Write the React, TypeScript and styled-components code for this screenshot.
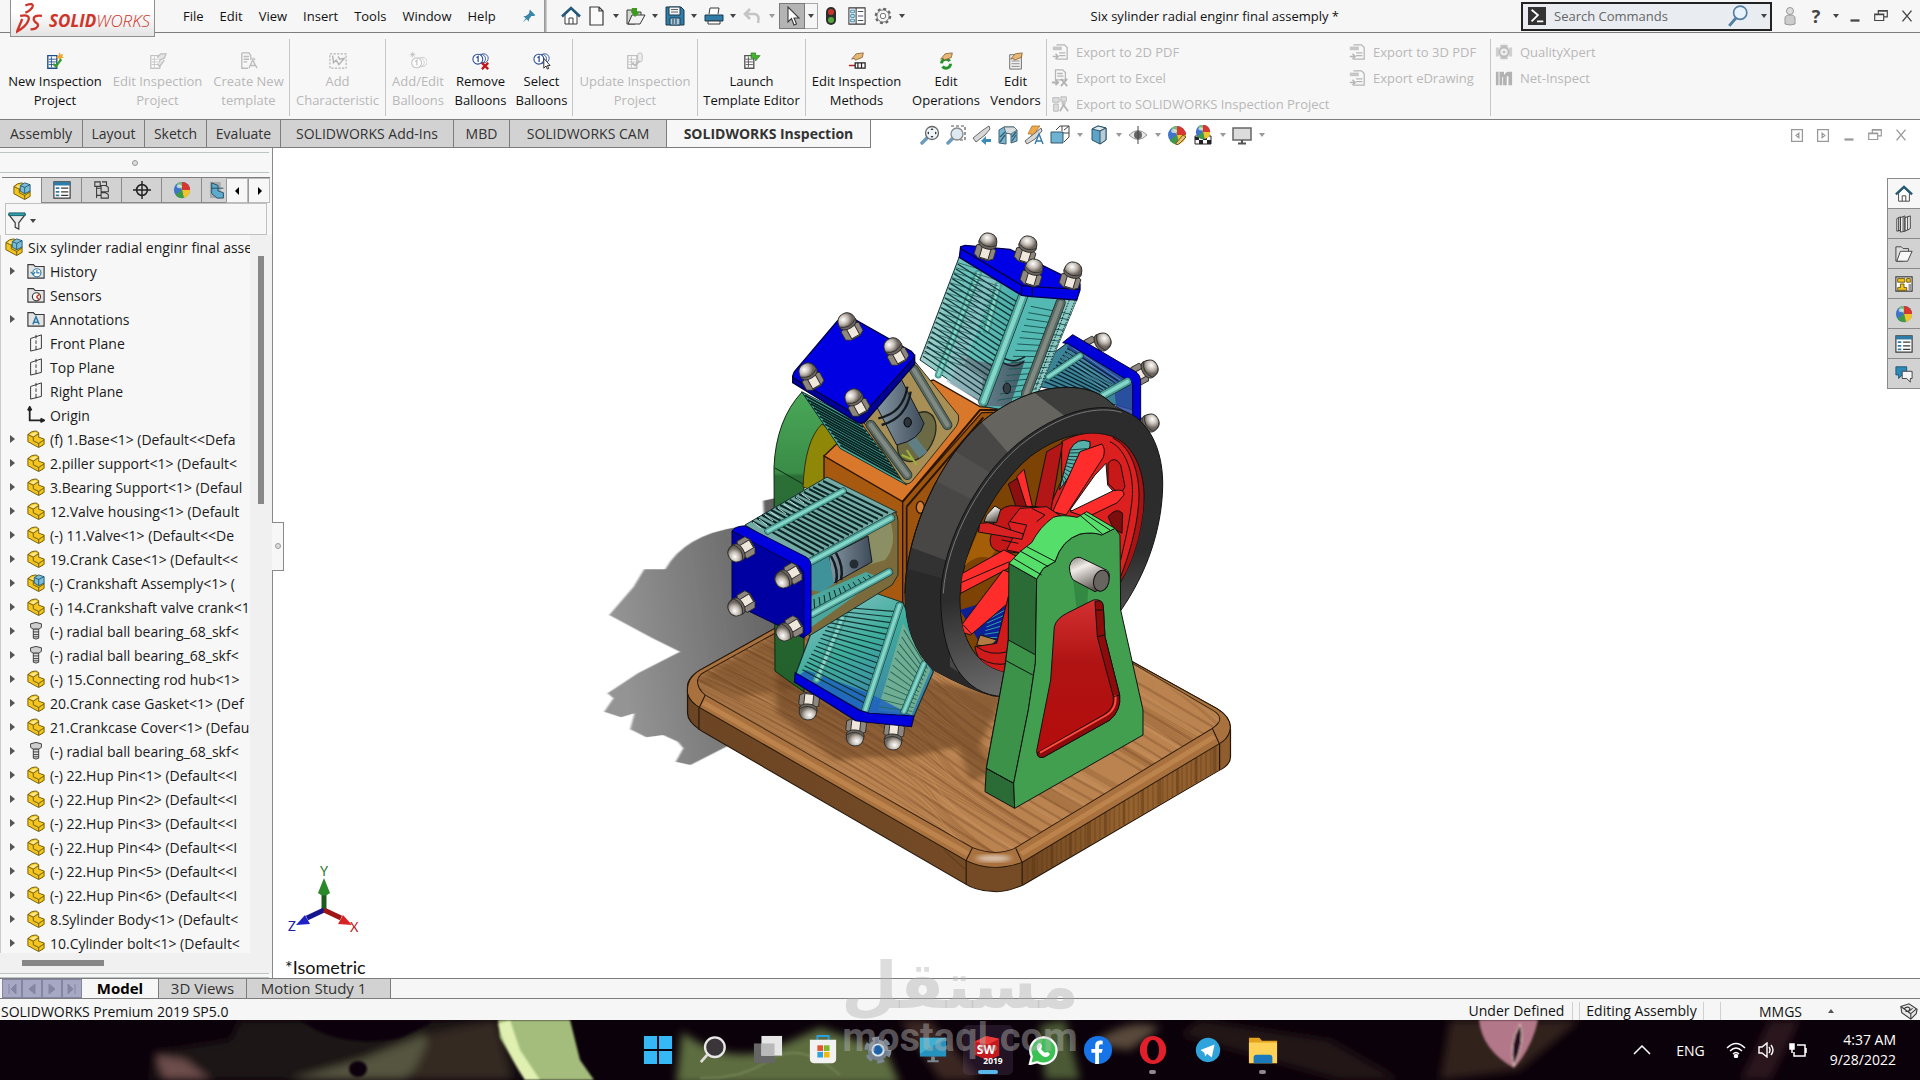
import React from 'react';
import styled, { createGlobalStyle, css } from 'styled-components';

const GlobalStyle = createGlobalStyle`
  *, *::before, *::after { box-sizing: border-box; }
  body {
    margin: 0;
    background: #fff;
    color: #1a1a1a;
    font-family: "Open Sans", "Noto Sans", sans-serif;
    font-size: 14px;
  }
  button, input { font: inherit; color: inherit; }
  button { padding: 0; border: 0; background: none; white-space: nowrap; }
  svg { display: block; flex: none; }
`;

/* ---------- icons ---------- */

const ink = '#3a3a3a';
const blue = '#2f7da6';

const Ball = () => (
  <>
    <circle cx="10" cy="10" r="9" fill="#3f74c8" />
    <path d="M10 10 4 3.300A9 9 0 0 1 10 1z" fill="#7ab97c" />
    <path d="M10 10V1a9 9 0 0 1 9 9z" fill="#d8372f" />
    <path d="M10 10h9a9 9 0 0 1-7 8.800z" fill="#f0c52c" />
    <path d="M10 10 12 18.800A9 9 0 0 1 2.800 15.400z" fill="#3e9a45" />
    <ellipse cx="7" cy="6" rx="3" ry="2" fill="#fff" opacity=".6" />
  </>
);
const PartShape = () => (
  <>
    <path d="M1 5 5 2 10 1 13 3V8L19 10V16L13 19.500 1 13z" fill="#f2c51f" stroke="#6b5206" strokeWidth="1" />
    <path d="M1 5 7 8 13 4M7 8V12L13 15V19M13 15 19 11" stroke="#6b5206" fill="none" />
    <path d="M3 5 7 7 11.500 4 9 2.500z" fill="#fbe98d" />
  </>
);
const HandShape = () => <path d="M4 8 9 2 17 1 16 6 11 8 8 9 7 7z" fill="#e6b877" stroke="#7a5320" strokeWidth=".8" />;
const Folder = () => <path d="M1 3h6l2 2h10v13H1z" fill="#e4e4e4" stroke={ink} strokeWidth="1.300" />;
const Balloons = () => (
  <>
    <circle cx="13" cy="7" r="5" fill="#fff" stroke="currentColor" />
    <circle cx="10" cy="7.500" r="5" fill="#fff" stroke="currentColor" />
    <circle cx="6.500" cy="8" r="5.500" fill="#fff" stroke="currentColor" strokeWidth="1.200" />
    <path d="M5 6.500 6.800 5v6" stroke="currentColor" fill="none" strokeWidth="1.400" />
  </>
);
const Sheet = ({ tone = '#1f4f8a' }: { tone?: string }) => (
  <>
    <path d="M2 4h10v14H2z" fill="#fff" stroke={tone} strokeWidth="1.500" />
    <path d="M3 8h8M3 11h8M3 14h8M6 5v12" stroke={tone} />
  </>
);
const Glass = () => <path d="M7.500 12.500 2 18" stroke="#6d9bbb" strokeWidth="3.500" strokeLinecap="round" />;

const art: Record<string, React.ReactNode> = {
  home: (
    <>
      <path d="M4 9v9h12V9l-6-6z" fill="#fff" stroke={ink} />
      <path d="M1 10.500 10 2l9 8.500" fill="none" stroke="#245a78" strokeWidth="2.600" />
      <path d="M8 18v-6h4v6" fill="none" stroke={ink} />
    </>
  ),
  doc: <path d="M3 1h9l4 4v14H3zM12 1v4h4" fill="#fafafa" stroke={ink} strokeWidth="1.200" />,
  open: (
    <>
      <path d="M1 4h5l2 2h7v3L9 18H1z" fill="#d5d5d5" stroke={ink} />
      <path d="M6 9h13l-5 9H2z" fill="#f2f2f2" stroke={ink} />
      <path d="M6 2h5v4h3l-5 5-4-5z" fill="#3c9a1c" />
    </>
  ),
  save: (
    <>
      <path d="M1 1h15l3 3v15H1z" fill={blue} stroke="#183b4f" />
      <path d="M4 1h11v8H4z" fill="#f3f3f3" stroke="#183b4f" />
      <path d="M6 3.500h7M6 6h7" stroke="#666" />
      <path d="M5 12h10v7H5zM8 13v5M11 13v5" fill="#aac8d8" stroke="#183b4f" />
    </>
  ),
  print: (
    <>
      <path d="M5 8 6 2h9l-1 6" fill="#fff" stroke={ink} />
      <path d="M1 9h18v6H1z" fill={blue} stroke="#183b4f" />
      <path d="M4 15h12v3H4z" fill="#fff" stroke={ink} />
    </>
  ),
  undo: <path d="M4 8h8q5 1 3 9M7 3 2 8l5 5" fill="none" stroke="#c4c4c4" strokeWidth="2.600" />,
  cursor: <path d="M6 1v15l3.500-3.500L12 19l2.500-1-2.500-6h5z" fill="#fff" stroke={ink} strokeWidth="1.100" />,
  traffic: (
    <>
      <rect x="5" y="1" width="10" height="18" rx="5" fill="#2d2d2d" />
      <circle cx="10" cy="6" r="3" fill="#c9342b" />
      <circle cx="10" cy="14" r="3" fill="#55a83e" />
    </>
  ),
  list: (
    <>
      <path d="M1 1h18v18H1zM9 1v18" fill="#fff" stroke={ink} strokeWidth="1.200" />
      <path d="M3 3.500h4v3H3zM3 8.500h4v3H3zM3 13.500h4v3H3z" fill="#d6ecf7" stroke={blue} />
      <path d="M11 5h6M11 10h6M11 15h6" stroke={ink} />
    </>
  ),
  gear: (
    <>
      <circle cx="10" cy="10" r="8" fill="none" stroke="#666" strokeWidth="2.400" strokeDasharray="3.300 2.980" />
      <circle cx="10" cy="10" r="6.800" fill="#f4f4f4" stroke="#666" />
      <circle cx="10" cy="10" r="3" fill="#fff" stroke="#666" />
    </>
  ),
  pin: <path d="M11 2 18 9l-2 1-3 0-3 4 0 3-3-3-5 4 4-5-3-3h3l4-3z" fill="#3b86a8" />,
  newProj: (
    <>
      <Sheet />
      <path d="m15 0 1 3 3-1-1 3 2 1-3 1-2 3-1-3-3-1 3-2z" fill="#efa629" />
      <path d="M8 13 11 16 17 8" fill="none" stroke="#3d9a2d" strokeWidth="2.500" />
    </>
  ),
  editProj: (
    <>
      <Sheet tone="#c4c4c4" />
      <path d="M9 6 13 2h6l-2 5-5 2M9 13l3 3 5-7" fill="#e4e4e4" stroke="#c0c0c0" strokeWidth="1.500" />
    </>
  ),
  template: (
    <>
      <path d="M2 1h8l2 3v5M2 1v17h7M4 5h6M4 8h6M4 11h4" fill="none" stroke="#bcbcbc" strokeWidth="1.500" />
      <path d="M10 18 14 9l5 9M12 15h5" fill="none" stroke="#bcbcbc" strokeWidth="1.500" />
      <circle cx="15" cy="8" r="2" fill="#ccc" />
    </>
  ),
  characteristic: (
    <>
      <path d="M1 2h18v16H1z" fill="none" stroke="#b4b4b4" strokeWidth="1.300" strokeDasharray="2.500 1.500" />
      <path d="m4 4 1 8 3-3 3 5 6-7-5 1-2-3" fill="none" stroke="#b4b4b4" strokeWidth="1.600" />
    </>
  ),
  balloonAdd: (
    <>
      <g color="#c4c4c4" transform="translate(2 4)"><Balloons /></g>
      <path d="M4 0v6M1 3h6M2 1l4 4M6 1 2 5" stroke="#c4c4c4" />
    </>
  ),
  balloonRemove: (
    <>
      <g color="#2c4c9a"><Balloons /></g>
      <path d="m11 12 7 7M18 12l-7 7" stroke="#c01818" strokeWidth="2.600" />
    </>
  ),
  balloonSelect: (
    <>
      <g color="#2c4c9a"><Balloons /></g>
      <path d="M12 7v11l2.500-2.500L16 19l1.500-.700L16 15h3z" fill="#fff" stroke="#222" />
    </>
  ),
  updateProj: (
    <>
      <Sheet tone="#c0c0c0" />
      <rect x="13" y="1" width="5" height="10" rx="2.500" fill="#eee" stroke="#bbb" />
      <path d="M7 12l3 3 5-5" fill="none" stroke="#bbb" strokeWidth="2" />
    </>
  ),
  launch: (
    <>
      <Sheet tone="#555" />
      <path d="M9 1h5v3h5l-5 6V7H9z" fill="#41b52c" stroke="#23701a" strokeWidth=".7" />
    </>
  ),
  methods: (
    <>
      <HandShape />
      <path d="M1 15h7" stroke="#b51c1c" strokeWidth="1.600" />
      <path d="M8 12h11v6H8zM11 12v6M15 12v6" fill="#fff" stroke="#222" strokeWidth="1.400" />
    </>
  ),
  operations: (
    <>
      <circle cx="10" cy="13" r="5" fill="none" stroke="#27932a" strokeWidth="3.400" strokeDasharray="12 3.700" />
      <HandShape />
    </>
  ),
  vendors: (
    <>
      <path d="M3 3h13v16H3z" fill="#eee" stroke="#666" />
      <path d="M5 10h9M5 13h9M5 16h9" stroke="#888" />
      <HandShape />
    </>
  ),
  exportDoc: (
    <>
      <path d="M6 2h9l3 3v13H6" fill="none" stroke="#b6b6b6" strokeWidth="1.400" />
      <path d="M2 4h10v4H2z" fill="#c6c6c6" />
      <path d="M9 11h7M9 14h7M2 15h6M5 12l3 3-3 3" fill="none" stroke="#b6b6b6" strokeWidth="1.600" />
    </>
  ),
  exportXls: (
    <>
      <path d="M5 1h8l3 3v8H5zM7 5h6M7 8h7" fill="none" stroke="#b6b6b6" strokeWidth="1.400" />
      <path d="M1 15h7M5 12l3 3-3 3M11 11l7 8M18 11l-7 8" fill="none" stroke="#b2b2b2" strokeWidth="2" />
    </>
  ),
  exportSw: (
    <>
      <path d="M2 3h7v5H2zM11 2h6v5h-6zM3 10h5v8H3z" fill="#dedede" stroke="#b6b6b6" />
      <circle cx="14" cy="9" r="2.500" fill="#c6c6c6" />
      <path d="M10 18 14 11l5 7" fill="none" stroke="#b6b6b6" strokeWidth="2" />
    </>
  ),
  quality: (
    <>
      <path d="M6 2h8v16H6z" fill="#c4c4c4" />
      <path d="M1 5h4v10H1zM15 5h4v10h-4z" fill="#d0d0d0" />
      <circle cx="10" cy="10" r="5" fill="#eee" stroke="#bbb" strokeWidth="2" />
      <circle cx="10" cy="10" r="1.500" fill="#bbb" />
    </>
  ),
  netInspect: <path d="M1 3h3v15H1zM5 3h5v4q2-4 4-4h5v15h-4V8h-2v10H9V9H8v9H5z" fill="#b2b2b2" />,
  zoomFit: (
    <>
      <Glass />
      <circle cx="12" cy="8" r="6.500" fill="#eef6fa" stroke="#666" strokeWidth="1.300" />
      <path d="m12 3 1.500 2h-3zM12 13l1.500-2h-3zM7 8l2-1.500v3zM17 8l-2-1.500v3z" fill="#333" />
    </>
  ),
  zoomArea: (
    <>
      <path d="M5 1h14v14h-5" fill="none" stroke="#555" strokeDasharray="3 2" strokeWidth="1.200" />
      <Glass />
      <circle cx="11" cy="9" r="6" fill="#dce9f0" stroke="#888" strokeWidth="1.300" />
    </>
  ),
  prevView: (
    <>
      <path d="M1 13 11 5l6-4 1 3-5 6-9 7z" fill="#d8d8d8" stroke="#666" />
      <path d="M19 14h-5v-3l-5 5 5 4v-3h5z" fill="#3b8db8" />
    </>
  ),
  section: (
    <>
      <path d="M1 5 6 2h10l3 3v11l-6 2V9L8 8v11l-7-1z" fill="#79b6d3" stroke="#44606e" />
      <path d="M2 17 7 10M2 12l5-5M14 16l4-6M14 12l4-5" stroke="#2f6076" strokeWidth="1.300" />
      <path d="M6 2h10l3 3-6 4-5-1z" fill="#d8dde0" stroke="#44606e" strokeWidth=".8" />
    </>
  ),
  annotate: (
    <>
      <path d="M8 1h8l-4 5h4L4 18l4-9H4z" fill="#f0a94a" stroke="#9c6a1e" strokeWidth=".7" />
      <path d="M1 16 11 8l6-5 1 3-7 8-8 5z" fill="#d8d8d8" stroke="#666" />
      <path d="m11 19 4-10 4 10M12.500 16h5" fill="none" stroke="#3479ad" strokeWidth="1.400" />
    </>
  ),
  orient: (
    <>
      <path d="M6 5 10 1h9v11l-5 5M14 5l5-4M12 1v5M6 8h13" fill="none" stroke="#444" />
      <path d="M1 7h12v11H1z" fill="#6fb2d2" stroke="#35596b" />
    </>
  ),
  cube: (
    <>
      <path d="M3 4 9 1l8 2v12l-6 4-8-4z" fill="#5ca5c8" stroke="#2b5569" />
      <path d="M3 4 11 6l6-3-8-2z" fill="#dfe9ee" stroke="#2b5569" />
      <path d="M11 6v13l6-4V3z" fill="#b9cbd4" stroke="#2b5569" />
    </>
  ),
  eye: (
    <>
      <path d="M1 10q9-9 18 0-9 9-18 0z" fill="#e8e8e8" stroke="#999" />
      <circle cx="10" cy="10" r="4" fill="#666" />
      <path d="M10 1v18" stroke="#444" />
    </>
  ),
  ball: <Ball />,
  appearance: (
    <>
      <Ball />
      <path d="m9 18 7-8 3 2-7 7-3 1z" fill="#e9c079" stroke="#78571c" />
    </>
  ),
  scene: (
    <>
      <path d="M2 11h16v8H2z" fill="#fff" stroke="#222" />
      <path d="M2 12h4v3H2zM10 12h4v3h-4zM6 15h4v4H6zM14 15h4v4h-4z" fill="#222" />
      <g transform="translate(2 -1) scale(.8)"><Ball /></g>
    </>
  ),
  monitor: (
    <>
      <path d="M1 3h18v12H1z" fill="#dcdcdc" stroke="#666" strokeWidth="1.500" />
      <path d="M10 15v3M6 18.500h8" stroke="#555" strokeWidth="2" />
    </>
  ),
  asm: (
    <>
      <PartShape />
      <path d="M8 4 13 1l6 2v7l-6 3-5-3z" fill="#79bddb" stroke="#22566f" />
      <path d="m8 4 5 2 6-3M13 6v7" fill="none" stroke="#22566f" />
    </>
  ),
  part: <PartShape />,
  screw: (
    <>
      <path d="M4 2q6-3 12 0v4l-3 2H7L4 6z" fill="#cfcfcf" stroke="#333" />
      <path d="M7 8h6v10q-3 2-6 0zM7 11h6M7 14h6M7 16.500h6" fill="#ddd" stroke="#333" />
    </>
  ),
  history: (
    <>
      <Folder />
      <circle cx="11" cy="12" r="4.500" fill="#fff" stroke={blue} strokeWidth="1.300" />
      <path d="M11 9v3h3M4 11l3 3 2-3" fill="none" stroke={blue} strokeWidth="1.300" />
    </>
  ),
  sensors: (
    <>
      <Folder />
      <circle cx="10.500" cy="12" r="4.500" fill="#fff" stroke={ink} strokeWidth="1.300" />
      <path d="M10.500 12 14 9M10.500 12l3 3.500" stroke="#c8462e" strokeWidth="1.800" />
    </>
  ),
  annotations: (
    <>
      <Folder />
      <path d="M6.500 16 10 7.500 13.500 16M8 13.500h4" fill="none" stroke={blue} strokeWidth="1.700" />
    </>
  ),
  plane: <path d="M4 5v14l12-3V1zM10 1v4M10 7v4M10 13v5" fill="none" stroke={ink} strokeWidth="1.100" />,
  origin: <path d="M3 3v13h14M1 5l2-4 2 4M15 14l4 2-4 2" fill="none" stroke="#222" strokeWidth="2" />,
  property: (
    <>
      <path d="M1 1h18v18H1z" fill="#fff" stroke={ink} strokeWidth="1.300" />
      <path d="M1 1h18v4H1z" fill={blue} />
      <path d="M3 7h4v2H3zM3 11h4v2H3zM3 15h4v2H3z" fill={blue} />
      <path d="M9 8h8M9 12h8M9 16h8" stroke={ink} strokeWidth="1.300" />
    </>
  ),
  config: (
    <path
      d="M2 1h6v5H2zM4 6v13M4 8h5M4 16h5M9 5h5l3 2v5H9zM9 13h5l3 2v4H9zM10 1h5v4"
      fill="none"
      stroke={ink}
      strokeWidth="1.200"
    />
  ),
  target: (
    <>
      <circle cx="10" cy="10" r="6" fill="none" stroke="#222" strokeWidth="1.800" />
      <path d="M10 0v20M0 10h20" stroke="#222" strokeWidth="1.600" />
    </>
  ),
  camCube: (
    <>
      <path d="M1 1h12v18H1z" fill="#aaa" />
      <path d="M3 2 10 5v6l6 2v6H9L3 14z" fill="#5fabce" stroke="#1e4a60" />
      <path d="M3 8h13" stroke="#1e4a60" />
    </>
  ),
  filter: (
    <>
      <path d="M1 3h18l-7 9v7l-4-2v-5z" fill="#ececec" stroke={ink} strokeWidth="1.300" />
      <path d="M1 1h18v3H1z" fill="#2fa0ad" stroke="#1b5b64" />
    </>
  ),
  books: <path d="m2 4 4-2v15l-4 1zM6 3l5-2v17l-5 1zM11 3l6-2v14l-6 3zM4 3v15M9 2v16M14 2v15" fill="#eee" stroke={ink} />,
  folder: (
    <>
      <path d="M1 2h6l2 2h6v3L9 18H1z" fill="#ddd" stroke={ink} />
      <path d="M6 7h13l-5 11H2z" fill="#f7f7f7" stroke={ink} />
    </>
  ),
  palette: (
    <>
      <path d="M1 2h18v16H1z" fill="#fff" stroke={ink} strokeWidth="1.300" />
      <path d="M3 4h8v4H3zM13 4h4v4h-4zM6 10h4v4h3v3H3v-3h3z" fill="#f2c51f" stroke="#6b5206" />
      <path d="M15 10h3v7h-3z" fill="#999" />
    </>
  ),
  chat: (
    <>
      <path d="M1 2h12v9H8l-4 4v-4H1z" fill="#2f89b8" stroke="#1b5673" />
      <path d="M8 7h11v8h-2v4l-4-4H8z" fill="#f5f5f5" stroke={ink} />
    </>
  ),
  user: (
    <>
      <circle cx="10" cy="5" r="3.500" fill="#ddd" stroke="#999" />
      <path d="M5 18v-6q0-3 5-3t5 3v6q-5 2-10 0z" fill="#ccc" stroke="#999" />
    </>
  ),
  minimize: <path d="M5 15h10" stroke="currentColor" strokeWidth="2.500" />,
  restore: <path d="M3 8h10v7H3zM7 8V4h10v7h-4M7 4.500h10M3 8.500h10" fill="none" stroke="currentColor" strokeWidth="1.300" />,
  close: <path d="m5 4 10 12M15 4 5 16" stroke="currentColor" strokeWidth="1.500" />,
  dockLeft: <path d="M4 4h12v13H4zM12 8l-3 2.500 3 2.500z" fill="none" stroke="currentColor" strokeWidth="1.400" />,
  dockRight: <path d="M4 4h12v13H4zM9 8l3 2.500L9 13z" fill="none" stroke="currentColor" strokeWidth="1.400" />,
  prompt: (
    <>
      <path d="M0 0h20v20H0z" fill="#333" />
      <path d="m4 3 7 6-7 7M10 16h7" fill="none" stroke="#fff" strokeWidth="2" />
    </>
  ),
  search: (
    <>
      <circle cx="12" cy="7" r="6" fill="#e8f3fb" stroke="#4f7fa3" strokeWidth="1.500" />
      <path d="M8 12 2 19" stroke="#4f7fa3" strokeWidth="2.600" />
    </>
  ),
  tag: (
    <>
      <path d="M1 5 10 2l9 6-1 5-6 6L2 12z" fill="#e8e8e8" stroke={ink} strokeWidth="1.200" />
      <path d="M4 8q4-4 7-1-1 5-5 3M9 11l5-4M12 19v-6l6-5M1 5l11 8" fill="none" stroke={ink} strokeWidth="1.200" />
    </>
  ),
};

const Icon = ({ name, size = 20 }: { name: string; size?: number }) => (
  <svg width={size} height={size} viewBox="0 0 20 20" aria-hidden="true">{art[name]}</svg>
);

/* ---------- layout ---------- */

const Shell = styled.div`
  display: flex;
  flex-direction: column;
  height: 100vh;
  position: relative;
  overflow: hidden;
`;

const TitleBar = styled.header`
  display: flex;
  align-items: center;
  height: 33px;
  flex: none;
  background: #f6f6f6;
  border-bottom: 1px solid #7d7d7d;
  font-size: 13px;
`;
const Logo = styled.div`
  display: flex;
  align-items: center;
  gap: 6px;
  align-self: flex-start;
  width: 145px;
  height: 37px;
  margin-left: 10px;
  padding: 0 0 0 5px;
  flex: none;
  z-index: 1;
  border: 1px solid #909090;
  border-top: 0;
  background: linear-gradient(#fff 30%, #e4e4e4);
  color: #cf3429;
  font-size: 17px;
  font-style: italic;
  b { font-weight: 700; }
`;
const LogoText = styled.span`
  padding-top: 5px;
  font-weight: 300;
`;
const Menu = styled.nav`
  display: flex;
  gap: 16px;
  margin: 0 20px 0 28px;
  color: #111;
`;
const Divider = styled.span`
  width: 3px;
  height: 32px;
  margin: 0 11px 0 2px;
  background: linear-gradient(90deg, #8c8c8c, #d6d6d6);
`;
const Tools = styled.div`
  display: flex;
  align-items: center;
`;
const ToolButton = styled.button<{ $on?: boolean }>`
  display: flex;
  align-items: center;
  justify-content: center;
  width: 26px;
  height: 26px;
  flex: none;
  ${p => p.$on && css`background: #b4b4b4; outline: 1px solid #7a7a7a; outline-offset: -1px;`}
`;
const ArrowButton = styled.button<{ $pale?: boolean; $framed?: boolean }>`
  display: flex;
  align-items: center;
  justify-content: center;
  width: 13px;
  height: 26px;
  flex: none;
  ${p => p.$framed && css`border: 1px solid #a8a8a8; border-left: 0;`}
  &::after {
    content: "";
    border: 3px solid transparent;
    border-top: 4px solid ${p => (p.$pale ? '#999' : '#444')};
    border-bottom: 0;
  }
`;
const DocTitle = styled.div`
  flex: 1;
  text-align: center;
  color: #111;
`;
const SearchBox = styled.label`
  display: flex;
  align-items: center;
  gap: 8px;
  width: 251px;
  height: 29px;
  padding: 0 0 0 5px;
  border: 2px solid #222;
  background: #e9ecf0;
  input {
    flex: 1;
    min-width: 0;
    padding: 0;
    border: 0;
    outline: 0;
    background: none;
    &::placeholder { color: #666; opacity: 1; }
  }
`;
const WindowButtons = styled.div`
  display: flex;
  align-items: center;
  padding-left: 5px;
  color: #444;
  b { font-size: 18px; }
`;

const Ribbon = styled.section`
  display: flex;
  height: 86px;
  padding: 6px 0 3px 3px;
  flex: none;
  background: #f7f7f7;
  font-size: 13px;
`;
const RibbonGroup = styled.div`
  display: flex;
  border-right: 1px solid #c6c6c6;
`;
const RibbonButton = styled.button<{ $w: number }>`
  display: flex;
  flex-direction: column;
  align-items: center;
  gap: 2px;
  width: ${p => p.$w}px;
  padding-top: 13px;
  color: #111;
  line-height: 19px;
  &:disabled { color: #b8b8b8; }
  span { white-space: pre-line; }
`;
const ExportGrid = styled.div`
  display: grid;
  grid-template-columns: 297px 146px;
  grid-auto-rows: 26px;
  border-right: 1px solid #c6c6c6;
`;
const ExportButton = styled.button`
  display: flex;
  align-items: center;
  gap: 7px;
  height: 26px;
  padding-left: 4px;
  color: #b8b8b8;
`;

const TabRow = styled.div`
  display: flex;
  height: 29px;
  flex: none;
  background: #fff;
  border-top: 1px solid #7d7d7d;
`;
const CommandTab = styled.button<{ $w: number; $on?: boolean }>`
  width: ${p => p.$w}px;
  height: 28px;
  border-right: 1px solid #7d7d7d;
  border-bottom: 1px solid #7d7d7d;
  background: ${p => (p.$on ? '#f7f7f7' : '#d2d2d2')};
  font-weight: ${p => (p.$on ? 700 : 400)};
  color: #333;
`;
const ViewTools = styled(Tools)`
  flex: 1;
  margin-left: 46px;
  padding-top: 2px;
`;
const DocButtons = styled(Tools)`
  padding: 2px 6px 0 0;
  color: #999;
`;

const Body = styled.main`
  display: flex;
  flex: 1;
  min-height: 0;
`;
const Panel = styled.aside`
  display: flex;
  flex-direction: column;
  width: 273px;
  flex: none;
  background: #f7f7f7;
  border-right: 1px solid #8a8a8a;
`;
const Grip = styled.div`
  display: flex;
  align-items: center;
  justify-content: center;
  height: 21px;
  margin: 4px 3px 4px 0;
  flex: none;
  border: 1px solid #bcc4c4;
  border-width: 1px 0;
`;
const Dot = styled.i`
  width: 6px;
  height: 6px;
  border: 1px solid #999;
  border-radius: 50%;
  background: #ddd;
`;
const PanelTabs = styled.div`
  display: flex;
  height: 26px;
  flex: none;
  margin: 0 2px;
  border-top: 1px solid #7d7d7d;
`;
const PanelTab = styled.button<{ $on?: boolean }>`
  display: flex;
  align-items: center;
  justify-content: center;
  width: 40px;
  flex: none;
  overflow: hidden;
  border-right: 1px solid #8a8a8a;
  border-bottom: ${p => (p.$on ? 0 : 1)}px solid #8a8a8a;
  background: ${p => (p.$on ? '#f7f7f7' : '#d2d2d2')};
  &:nth-child(6) { width: 24px; padding-left: 8px; border-right: 0; }
`;
const Pager = styled.button`
  width: 22px;
  flex: none;
  border: 1px solid #bbb;
  border-left-color: #999;
  background: #f7f7f7;
`;
const FilterBox = styled.div`
  display: flex;
  align-items: center;
  height: 32px;
  margin: 0 5px;
  padding: 3px 0 0 2px;
  flex: none;
  border: 1px solid #c0c0c0;
`;
const TreeArea = styled.div`
  display: flex;
  flex: 1;
  min-height: 0;
  border-left: 1px solid #ccc;
`;
const Tree = styled.ul`
  flex: 1;
  min-width: 0;
  margin: 0;
  padding: 0;
  list-style: none;
  overflow: hidden;
`;
const TreeRow = styled.li<{ $root?: boolean }>`
  display: flex;
  align-items: center;
  gap: 5px;
  height: 24px;
  padding-left: 4px;
  white-space: nowrap;
`;
const Caret = styled.button<{ $hidden?: boolean }>`
  width: 17px;
  height: 10px;
  flex: none;
  visibility: ${p => (p.$hidden ? 'hidden' : 'visible')};
  &::after {
    content: "";
    display: block;
    width: 0;
    margin-left: 5px;
    border: 4px solid transparent;
    border-left: 5px solid #555;
    border-right: 0;
  }
`;
const VScroll = styled.div`
  width: 22px;
  flex: none;
  padding: 21px 0 0 8px;
  background: #f0f0f0;
  &::after { content: ""; display: block; width: 6px; height: 248px; background: #878787; }
`;
const HScroll = styled.div`
  height: 20px;
  flex: none;
  padding: 7px 0 0 22px;
  background: #f0f0f0;
  &::after { content: ""; display: block; width: 82px; height: 6px; background: #878787; }
`;
const PanelFoot = styled.div`
  height: 5px;
  flex: none;
  margin-right: 3px;
  border-top: 1px solid #bcc4c4;
  border-bottom: 1px solid #bcc4c4;
`;

const Viewport = styled.section`
  position: relative;
  flex: 1;
  min-width: 0;
  background: #fff;
`;
const Handle = styled.button`
  position: absolute;
  left: -1px;
  top: 45%;
  display: flex;
  align-items: center;
  justify-content: center;
  width: 12px;
  height: 49px;
  border: 1px solid #8a8a8a;
  border-left: 0;
  background: #f7f7f7;
`;
const Triad = styled.div`
  position: absolute;
  left: 12px;
  bottom: 0;
  color: #111;
  font-family: Lato, sans-serif;
  font-size: 18px;
  line-height: 22px;
`;
const TaskPane = styled.nav`
  position: absolute;
  right: 0;
  top: 30px;
  width: 33px;
  border: 1px solid #8a8a8a;
  border-right: 0;
`;
const PaneTab = styled.button<{ $on?: boolean }>`
  display: flex;
  align-items: center;
  justify-content: center;
  width: 100%;
  height: 30px;
  border-bottom: 1px solid #8a8a8a;
  background: ${p => (p.$on ? '#f7f7f7' : '#d2d2d2')};
  &:last-child { height: 29px; border-bottom: 0; }
`;

const ModelTabs = styled.div`
  display: flex;
  height: 21px;
  flex: none;
  padding-left: 2px;
  background: #f6f6f6;
  border: 1px solid #7d7d7d;
  border-width: 1px 0;
  font-size: 15px;
`;
const StepButton = styled.button`
  display: flex;
  align-items: center;
  justify-content: center;
  width: 20px;
  background: #a7a9c4;
  border: 1px solid #8385a3;
`;
const ModelTab = styled.button<{ $w: number; $on?: boolean }>`
  width: ${p => p.$w}px;
  line-height: 19px;
  border-right: 1px solid #7d7d7d;
  background: ${p => (p.$on ? '#f7f7f7' : '#d2d2d2')};
  font-weight: ${p => (p.$on ? 700 : 400)};
  color: ${p => (p.$on ? '#000' : '#333')};
  &:last-child { padding-right: 10px; }
`;
const StatusBar = styled.footer`
  display: flex;
  align-items: center;
  height: 21px;
  flex: none;
  padding: 3px 2px 0 1px;
  background: #f6f6f6;
  color: #111;
`;
const StatusCell = styled.span<{ $w: number }>`
  width: ${p => p.$w}px;
  height: 18px;
  line-height: 18px;
  text-align: center;
  border-right: 1px solid #d0d0d0;
`;
const Units = styled.span`
  display: flex;
  align-items: center;
  gap: 26px;
  width: 179px;
  padding-left: 38px;
  &::after {
    content: "";
    border: 3px solid transparent;
    border-bottom: 4px solid #555;
    border-top: 0;
  }
`;
const Spacer = styled.span`
  flex: 1;
`;

const Taskbar = styled.nav`
  position: relative;
  display: grid;
  grid-template-columns: 1fr auto 1fr;
  height: 60px;
  flex: none;
  background: #0b010a;
  color: #fff;
`;
const Wallpaper = styled.svg`
  position: absolute;
  inset: 0;
  width: 100%;
  height: 100%;
`;
const Apps = styled.div`
  position: relative;
  grid-column: 2;
  display: flex;
  align-items: center;
  gap: 5px;
`;
const AppButton = styled.button<{ $on?: boolean; $mark?: string }>`
  position: relative;
  display: flex;
  align-items: center;
  justify-content: center;
  width: 50px;
  height: 50px;
  border-radius: 5px;
  background: ${p => (p.$on ? 'rgba(120, 90, 130, .22)' : 'none')};
  &::after {
    content: "";
    position: absolute;
    bottom: 1px;
    width: ${p => (p.$on ? 20 : 7)}px;
    height: 4px;
    border-radius: 2px;
    background: ${p => p.$mark || 'none'};
  }
`;
const Tray = styled.div`
  position: relative;
  display: flex;
  align-items: center;
  justify-content: flex-end;
  gap: 12px;
  padding-right: 24px;
`;
const Clock = styled.time`
  margin-left: 10px;
  text-align: right;
  line-height: 20px;
`;
const Lang = styled.span`
  margin: 0 9px 0 13px;
`;
const Watermark = styled.div`
  position: absolute;
  left: 50%;
  bottom: 20px;
  display: flex;
  flex-direction: column;
  align-items: center;
  transform: translateX(-50%);
  pointer-events: none;
  color: rgba(180, 180, 180, .45);
  font-family: "DejaVu Sans", sans-serif;
  font-size: 65px;
  font-weight: 700;
  line-height: 60px;
  small {
    font-family: Roboto, sans-serif;
    font-size: 40px;
    font-weight: 700;
    line-height: 44px;
  }
`;

/* ---------- the assembly drawing ---------- */

type P = [number, number];
/* evenly spaced strokes between edge a-b and edge c-d */
const ribs = (a: P, b: P, c: P, d: P, n: number) =>
  Array.from({ length: n }, (_, i) => {
    const t = (i + 0.5) / n;
    const f = (p: number, q: number) => Math.round(p + (q - p) * t);
    return `M${f(a[0], b[0])} ${f(a[1], b[1])}L${f(c[0], d[0])} ${f(c[1], d[1])}`;
  }).join('');

const Nut = ({ x, y, dx, dy }: { x: number; y: number; dx: number; dy: number }) => {
  const angle = (Math.atan2(dy, dx) * 180) / Math.PI - 90;
  return (
    <g transform={`translate(${x} ${y}) rotate(${angle})`} stroke="#2b2b2b" strokeWidth=".9">
      <path d="M-10 6 -6 4H6L10 6V15L5 18H-5L-10 15z" fill="#8f877e" />
      <path d="M-4 5H5V17H-4z" fill="#efe7dc" />
      <path d="M-9 2Q-9-9 0-9T9 2Q8 7 0 7T-9 2z" fill="url(#dome)" />
      <path d="M-9 1Q0 8 9 1" fill="none" strokeWidth=".8" />
    </g>
  );
};
const nuts = (list: P[], dx: number, dy: number) => list.map(([x, y]) => <Nut key={`${x}-${y}`} x={x} y={y} dx={dx} dy={dy} />);

const Rod = ({ a, b, w = 26, grey, line = '#17332f' }: { a: P; b: P; w?: number; grey?: boolean; line?: string }) => {
  const d = `M${a[0]} ${a[1]}L${b[0]} ${b[1]}`;
  return (
    <>
      <path d={d} stroke={line} strokeWidth={w + w / 6} strokeLinecap="round" />
      <path d={d} stroke={grey ? '#5c6660' : '#4fa39a'} strokeWidth={w} strokeLinecap="round" />
      <path d={d} stroke={grey ? '#7f8a83' : '#84d6c9'} strokeWidth={w / 2} strokeLinecap="round" />
    </>
  );
};

/* wood grain: long strokes along the deck, of uneven weight */
const grain = (step: number, seed: number) => {
  let out = '';
  for (let c = -430; c < 520; c += step) {
    const j = (c * 37 + seed * 91) % 23;
    const y = (x: number) => Math.round(x * 0.72 + c + j);
    out += `M150 ${y(150)}Q${500 + j * 9} ${y(500) + 10} ${800} ${y(800)}T1500 ${y(1500) + j}`;
  }
  return out;
};

const EngineDrawing = () => (
  <svg width="100%" height="100%" viewBox="273 148 1647 830" preserveAspectRatio="xMidYMid meet" role="img" aria-label="Radial engine assembly">
    <defs>
      <radialGradient id="dome" cx=".38" cy=".32"><stop offset="0" stopColor="#fff" /><stop offset=".55" stopColor="#c4bcb3" /><stop offset="1" stopColor="#6b645d" /></radialGradient>
      <linearGradient id="wood" x2="1" y2=".3"><stop offset="0" stopColor="#9a6a3e" /><stop offset=".45" stopColor="#b88250" /><stop offset="1" stopColor="#bb834f" /></linearGradient>
      <linearGradient id="woodL" x2="1"><stop offset="0" stopColor="#6c4524" /><stop offset="1" stopColor="#7c5027" /></linearGradient>
      <linearGradient id="woodR" x2="1"><stop offset="0" stopColor="#6f4621" /><stop offset=".5" stopColor="#96632f" /><stop offset="1" stopColor="#8f5d2e" /></linearGradient>
      <linearGradient id="shade" x1="1" x2="0" y2=".2"><stop offset="0" stopColor="#585858" /><stop offset="1" stopColor="#949494" /></linearGradient>
      <linearGradient id="fins" x2="1"><stop offset="0" stopColor="#a5cfcd" /><stop offset=".5" stopColor="#64bfb9" /><stop offset="1" stopColor="#45aaa5" /></linearGradient>
      <linearGradient id="finsDown" x2=".6" y2="1"><stop offset="0" stopColor="#9cc6d2" /><stop offset=".5" stopColor="#3fae9c" /><stop offset="1" stopColor="#3c80a8" /></linearGradient>
      <linearGradient id="piston" x2="1"><stop offset="0" stopColor="#8398a2" /><stop offset=".5" stopColor="#62707e" /><stop offset="1" stopColor="#3e4a58" /></linearGradient>
      <linearGradient id="tyreFace" x2=".2" y2="1"><stop offset="0" stopColor="#2b2b2b" /><stop offset=".65" stopColor="#2d2d2d" /><stop offset="1" stopColor="#6a6a6a" /></linearGradient>
      <linearGradient id="redPanel" x2="0" y2="1"><stop offset="0" stopColor="#d43131" /><stop offset=".4" stopColor="#b01313" /><stop offset="1" stopColor="#b40c0c" /></linearGradient>
      <linearGradient id="steel" x2=".5" y2="1"><stop offset="0" stopColor="#8b8580" /><stop offset=".35" stopColor="#f1ece8" /><stop offset="1" stopColor="#5b544f" /></linearGradient>
      <linearGradient id="rear" x2="0" y2="1"><stop offset="0" stopColor="#4aa858" /><stop offset=".27" stopColor="#3a8c47" /><stop offset=".28" stopColor="#2b6f37" /><stop offset="1" stopColor="#23602c" /></linearGradient>
      <filter id="soft"><feGaussianBlur stdDeviation="2" /></filter>
      <filter id="cast"><feGaussianBlur stdDeviation="7" /></filter>
      <clipPath id="deck"><path d="M232 600Q235 585 250 575L480 415 970 400 1265 550 1455 690Q1490 715 1455 745L985 1105Q940 1130 885 1103L250 645Q230 625 232 600z" /></clipPath>
      <clipPath id="leftSide"><path d="M210 660 868 1145V1210L240 752Q210 725 210 700z" /></clipPath>
      <clipPath id="tyreClip"><path d="M75 640C75 500 150 270 300 130 400 45 500 22 560 22 630 22 670 45 700 75L760 110 400 950 340 948Q270 930 160 870 75 790 75 640z" /></clipPath>
      <clipPath id="hole"><path d="M240 650C245 520 330 330 450 230 550 155 640 150 700 170 770 200 795 290 792 360 785 460 760 540 720 610L500 900 370 875C270 850 238 750 240 650z" /></clipPath>
    </defs>

    {/* shadow and wooden base */}
    <g transform="translate(600 480) scale(.42087 .33333)">
      <path filter="url(#soft)" fill="url(#shade)" d="M415 55 388 62 390 120 330 140Q200 165 155 268L105 268 80 320 22 405 125 475 190 515 90 580 18 640 32 655 10 695 50 712 82 700 72 748 110 772 150 765 185 785 198 805 180 845 215 855 300 800 480 700V55z" />
      <path fill="url(#woodL)" stroke="#22150a" strokeWidth="3" d="M208 620Q208 590 245 565L480 400 970 400 1265 545 1465 685Q1498 710 1498 750V830Q1498 855 1470 872L1005 1215Q960 1240 930 1234 890 1230 870 1213L240 752Q208 725 208 700z" />
      <g clipPath="url(#leftSide)"><path d={grain(17, 5)} fill="none" stroke="#4a2c12" strokeWidth="3" opacity=".45" /></g>
      <path fill="url(#woodR)" d="M1003 1140 1470 795 1496 750V830Q1496 855 1468 872L1005 1212z" />
      <path stroke="#5c3613" strokeWidth="4" opacity=".3" d={ribs([1010, 1140], [1480, 785], [1010, 1208], [1480, 862], 41)} />
      <path stroke="#4c2b10" strokeWidth="7" opacity=".3" d={ribs([1010, 1140], [1480, 785], [1010, 1208], [1480, 862], 11)} />
      <path fill="#a8713e" stroke="#22150a" strokeWidth="2.500" d="M208 640Q204 590 245 565L480 400 970 400 1265 545 1465 685Q1505 715 1496 755 1490 780 1470 792L1003 1147Q930 1180 870 1142L240 685Q212 665 208 640z" />
      <path fill="none" stroke="#c98f58" strokeWidth="14" opacity=".6" d="M245 668 875 1122M1000 1122 1460 770" />
      <path fill="url(#wood)" stroke="#22150a" strokeWidth="2.500" d="M232 600Q235 585 250 575L480 415 970 400 1265 550 1455 690Q1490 715 1455 745L985 1105Q940 1130 885 1103L250 645Q230 625 232 600z" />
      <g clipPath="url(#deck)">
        <path d={grain(13, 1)} fill="none" stroke="#7a4c25" strokeWidth="3" opacity=".28" />
        <path d={grain(41, 3)} fill="none" stroke="#5e3516" strokeWidth="7" opacity=".25" />
        <path d={grain(29, 7)} fill="none" stroke="#d6a26e" strokeWidth="4" opacity=".28" />
        <path filter="url(#cast)" fill="#5f3a1b" opacity=".5" d="M420 500 960 650 900 800 940 880 880 900 850 800 740 830 660 830 560 840 420 700z" />
        <path filter="url(#cast)" fill="#5f3a1b" opacity=".35" d="M232 600 480 420V620L330 650z" />
      </g>
      <path fill="none" stroke="#22150a" strokeWidth="2.500" d="M250 645 235 685V750M885 1103 870 1142V1213M988 1105 1003 1147V1213M1455 745 1472 792V870" />
      <ellipse cx="935" cy="1135" rx="42" ry="10" fill="#fff" opacity=".6" filter="url(#cast)" />
    </g>

    {/* rear support */}
    <path fill="url(#rear)" stroke="#0e2a12" d="M774 467Q776 420 802 392L824 424Q806 440 804 487L804 692 775 671z" />
    <path d="M775 468 803 484" stroke="#0e2a12" />
    <path fill="#8f8708" stroke="#33300a" d="M803 487Q805 440 822 424L842 440 826 495z" />

    {/* crank case */}
    <g transform="translate(720 210) scale(.33333)" stroke="#2a1502" strokeWidth="4">
      <path fill="#d9772a" d="M312 738 520 540 640 510 780 590 860 597 800 740 548 880z" />
      <path fill="#a6590f" d="M312 738 548 875V1340L312 1190z" />
      <path fill="#9c540f" d="M548 875 785 608 860 606 640 900 575 1010V1360L548 1340z" />
      <path fill="none" strokeWidth="6" d="M548 875 780 600 850 600M560 890 790 622" />
      <path fill="none" strokeWidth="5" d="M560 890V1345" />
      <ellipse cx="601" cy="892" rx="12" ry="18" fill="#d58236" />
      <ellipse cx="786" cy="652" rx="9" ry="13" fill="#4b2404" />
    </g>

    {/* right cylinder */}
    {nuts([[1102, 342], [1149, 369], [1150, 423]], -9, 5)}
    <g transform="translate(720 210) scale(.33333)">
      <path fill="#3b8498" stroke="#102030" strokeWidth="3" d="M960 530 1000 430 1060 385 1240 500V600L1100 560z" />
      <path fill="#2747a0" opacity=".85" d="M1040 410 1060 385 1240 500V615L1190 600 1180 520z" />
      <path d={ribs([1045, 410], [970, 520], [1200, 510], [1100, 570], 11)} stroke="#0d2430" strokeWidth="4" />
      <path d={ribs([1070, 400], [1020, 450], [1235, 510], [1170, 560], 6)} stroke="#6fa6c8" strokeWidth="2" />
      <path fill="#0000d8" stroke="#000038" strokeWidth="3" d="M1028 398 1058 374 1245 484Q1262 495 1262 515V632L1238 615V520L1045 402z" />
      <Rod a={[985, 500]} b={[1080, 437]} w={18} />
      <Rod a={[1150, 555]} b={[1222, 515]} w={22} />
    </g>

    {/* top cylinder */}
    <g transform="translate(720 210) scale(.33333)">
      <path fill="url(#fins)" stroke="#14302e" strokeWidth="3" d="M718 140 920 258 800 588 600 450z" />
      <path fill="#54b9b3" stroke="#14302e" strokeWidth="3" d="M920 258 1072 265 950 560 840 598 795 590z" />
      <path fill="#8dc9c4" d="M1030 268 1072 265 950 560 905 572z" />
      <path fill="url(#piston)" opacity=".85" d="M725 430Q800 480 915 450L870 590 800 588 690 520z" />
      <path fill="#9cc4cc" opacity=".6" d="M770 180 830 215 730 470 660 430zM690 440 790 500 780 570 680 515z" />
      <Rod a={[775, 190]} b={[655, 495]} w={18} line="#4a8a84" />
      <Rod a={[835, 225]} b={[800, 360]} w={18} line="#4a8a84" />
      <path d={ribs([716, 155], [606, 445], [898, 270], [795, 575], 20)} stroke="#123634" strokeWidth="4" />
      <path d={ribs([716, 150], [606, 435], [850, 190], [740, 480], 19)} stroke="#164744" strokeWidth="2" />
      <path d={ribs([935, 280], [830, 580], [1058, 305], [940, 560], 16)} stroke="#1c5a56" strokeWidth="3" />
      <path d="M845 440Q880 465 915 440M845 455Q880 480 912 455" fill="none" stroke="#18222a" strokeWidth="5" />
      <ellipse cx="861" cy="535" rx="11" ry="16" fill="#333e49" stroke="#111" strokeWidth="3" />
      <Rod a={[908, 262]} b={[790, 575]} />
      <Rod a={[1022, 278]} b={[918, 552]} grey />
      <path d="M1066 270 955 545M1048 270 945 540" stroke="#14302e" strokeWidth="3" strokeDasharray="5 4" />
      <path fill="#0000e6" stroke="#000048" strokeWidth="4" d="M735 106 870 118 1080 222V240L1070 270 935 260 905 256 718 142 722 110z" />
      <path fill="none" stroke="#000048" strokeWidth="4" d="M722 116 905 226 935 230 1078 238M905 226V254M937 230V260" />
    </g>
    {nuts([[988, 242], [1028, 245], [1034, 268], [1073, 271]], -3, 10)}

    {/* upper left cylinder */}
    <g transform="translate(720 210) scale(.33333)">
      <path fill="#4aa79c" stroke="#14302e" strokeWidth="3" d="M245 545 420 635 560 825 360 715z" />
      <path d={ribs([250, 550], [365, 712], [425, 645], [550, 815], 13)} stroke="#08201e" strokeWidth="5" />
      <path fill="#a88f55" stroke="#2c2b1b" strokeWidth="3" d="M430 635 585 455 715 615Q720 640 700 660L575 815Q560 830 545 810z" />
      <ellipse cx="590" cy="680" rx="50" ry="80" transform="rotate(28 590 680)" fill="#6b6a45" stroke="#2a2a1c" strokeWidth="4" />
      <path d="M575 690 610 735" stroke="#5f7f84" strokeWidth="30" />
      <path d="M545 735 580 750M560 720 590 765" stroke="#9fb23a" strokeWidth="6" />
      <path fill="url(#piston)" stroke="#111a22" strokeWidth="3" d="M470 590 545 510 612 640Q600 690 530 705z" />
      <path d="M475 625Q550 610 562 530M485 645Q560 625 572 545" fill="none" stroke="#131a20" strokeWidth="7" />
      <ellipse cx="563" cy="637" rx="11" ry="14" fill="#2b343c" stroke="#000" strokeWidth="3" />
      <Rod a={[452, 645]} b={[562, 795]} grey />
      <Rod a={[582, 480]} b={[682, 645]} grey />
      <path fill="#00009c" stroke="#000040" strokeWidth="4" d="M218 498V518L410 636Q425 645 437 634L584 462V435z" />
      <path fill="#0000e2" stroke="#000040" strokeWidth="4" d="M352 333Q375 318 400 326L575 425Q588 435 578 448L436 606Q425 618 405 612L224 506Q214 498 224 484z" />
    </g>
    {nuts([[847, 322], [893, 347], [808, 372], [854, 398]], 5, 9)}

    {/* bottom cylinder */}
    {nuts([[808, 711], [855, 737], [893, 741]], 1, -9)}
    <g transform="translate(600 480) scale(.42087 .33333)">
      <path fill="url(#finsDown)" stroke="#14302e" strokeWidth="3" d="M645 335 720 368 792 575 745 712 635 700 465 582 510 430z" />
      <path fill="#6fae93" d="M720 430 785 570 740 705 660 690z" />
      <path fill="#1b5fc0" opacity=".8" d="M490 570 640 640 740 705 635 700 468 590z" />
      <Rod a={[580, 400]} b={[515, 600]} w={16} line="#4a8a84" />
      <path d={ribs([570, 375], [478, 575], [700, 385], [630, 680], 17)} stroke="#123634" strokeWidth="3.500" />
      <path d={ribs([725, 440], [660, 690], [780, 560], [740, 700], 12)} stroke="#24665a" strokeWidth="2.500" />
      <Rod a={[712, 375]} b={[630, 690]} w={16} />
      <Rod a={[770, 550]} b={[722, 695]} w={14} />
      <path fill="#0000dc" stroke="#000048" strokeWidth="3" d="M464 578 615 690 640 700 746 708 740 740 635 727 608 722 462 606z" />
    </g>

    {/* left cylinder */}
    <path fill="#74aaa5" stroke="#14302e" d="M745 525 827 477 897 512 807 562z" />
    <path d={ribs([750, 522], [825, 480], [812, 556], [890, 512], 16)} stroke="#0c2523" strokeWidth="2" />
    <path d={ribs([750, 524], [805, 492], [758, 530], [813, 498], 9)} stroke="#bfe3df" strokeWidth="1" />
    <path fill="#7a6a3c" stroke="#14302e" d="M807 562 895 512Q898 515 898 522V575L892 585 809 636z" />
    <path fill="#8b8f63" d="M868 530 890 520Q898 545 885 560L868 565z" />
    <path fill="url(#piston)" stroke="#111a22" d="M829 556 868 536 872 562 832 584z" />
    <path fill="#3f929a" d="M809 566 829 556 834 584 822 592 809 590z" />
    <path d="M831 556Q839 570 836 583M836 553Q844 567 841 580" fill="none" stroke="#131a20" strokeWidth="2.500" />
    <circle cx="854" cy="564" r="4.500" fill="#242c33" />
    <path fill="#4aa59b" d="M809 597 866 572 880 578 810 628z" />
    <path d={ribs([812, 600], [870, 574], [812, 616], [880, 582], 12)} stroke="#0c2523" />
    <Rod a={[768, 531]} b={[843, 491]} w={6} />
    <Rod a={[810, 562]} b={[891, 518]} w={7} />
    <Rod a={[812, 614]} b={[889, 572]} w={7} />
    <path fill="#0000de" stroke="#000048" d="M732 531Q735 526 745 526L806 557Q811 560 811 566V632L803 638 798 570 740 535z" />
    <path fill="#0000a2" stroke="#000048" d="M732 531 800 567Q804 570 804 575V638L732 603z" />
    {nuts([[737, 553], [784, 579], [737, 607], [785, 632]], 10, -6)}

    {/* flywheel and front support */}
    <g transform="translate(880 380) scale(.33333)" stroke="#111" strokeWidth="3">
      <path fill="#484746" d="M75 640C75 500 150 270 300 130 400 45 500 22 560 22 630 22 670 45 700 75L760 110 400 950 340 948Q270 930 160 870 75 790 75 640z" />
      <g clipPath="url(#tyreClip)" stroke="none">
        <path fill="#66645f" d="M295 115 440 20 560 112 390 225z" />
        <path fill="#3d3d3c" d="M440 20H760V120L560 112z" />
        <path fill="#5b5956" d="M160 300 220 210 350 290 300 370z" opacity=".5" />
        <path fill="#333232" d="M60 490 210 545V600L60 560z" />
        <path fill="#2a2929" d="M60 560 210 600V860L400 980H60z" />
      </g>
      <path fill="none" d="M75 640C75 500 150 270 300 130 400 45 500 22 560 22 630 22 670 45 700 75" />
      <path fill="url(#tyreFace)" d="M182 640C190 480 300 270 440 170 560 85 660 70 730 92 820 125 850 230 848 320 845 450 800 580 722 692L400 950 350 948C230 930 180 800 182 640z" />
      <path fill="none" stroke="#777" d="M190 640C198 485 306 278 444 178 562 93 660 78 725 97" />
      <path fill="#7c4305" d="M240 650C245 520 330 330 450 230 550 155 640 150 700 170 770 200 795 290 792 360 785 460 760 540 720 610L500 900 370 875C270 850 238 750 240 650z" />
      <g clipPath="url(#hole)">
        <path fill="#a55e08" stroke="none" d="M250 560Q290 520 330 535L370 480 300 440z" />
        <path fill="#dc1f1f" d="M545 185C590 160 640 150 700 170 770 200 795 290 792 360 785 460 760 540 720 610L500 500 500 400 545 300z" />
        <path fill="#a81414" d="M700 175C762 205 782 300 776 370 770 450 745 530 722 590V605C780 520 792 430 792 360 795 290 770 200 700 170z" />
        <path fill="none" d="M690 185C745 210 765 300 755 370 745 450 730 500 722 540" />
        <path fill="#57b1aa" d="M545 300 570 210Q590 170 630 185 635 210 600 245L538 330z" />
        <path d={ribs([570, 205], [545, 300], [625, 200], [550, 320], 10)} stroke="#153f3b" />
        <path fill="#fff" d="M570 390 645 285 678 250 683 315 705 340 590 398z" />
        <path fill="#c91818" d="M684 250Q705 225 722 255L735 320 720 345 684 310z" />
        <path fill="#7c0e0e" d="M684 410Q710 380 728 400L726 460 700 445z" />
        <path fill="#b31616" d="M500 215 548 188 512 395 465 378z" />
        <path fill="#ff2c2c" d="M600 215 665 192Q678 205 670 232L558 405 518 395z" />
        <path fill="#ff2c2c" d="M570 395 700 332Q735 325 732 345L712 368 620 412z" />
        <path fill="#ff2c2c" d="M410 290 432 268 466 418 450 420z" />
        <path fill="#8e0f0f" d="M385 312 412 295 452 418 420 415z" />
        <path fill="#c41818" d="M345 410Q370 370 410 378L470 380 430 520 380 515Q330 520 330 480z" />
        <path fill="#e02020" d="M385 430 420 385 500 380 545 410 470 470 430 520 380 510 400 470z" />
        <path d="M390 425 440 435 428 470M455 385 495 405 470 425M365 480 415 490" fill="none" />
        <path fill="url(#steel)" d="M320 405 345 378 362 388 350 428 312 425z" />
        <path fill="#d82222" d="M300 430 325 428 430 462 426 478 295 456z" />
        <path fill="#ff2c2c" d="M244 582 372 510 412 530 385 565 242 640z" />
        <path d="M243 608 388 545" />
        <path fill="#0d1f96" stroke="none" d="M240 690 400 640V790H300z" />
        <path d={ribs([330, 690], [310, 780], [385, 650], [350, 780], 8)} stroke="#2ba3a3" />
        <path fill="#b27b42" d="M290 795 300 765 350 780 330 800z" />
        <path fill="#ff2c2c" d="M245 735 370 570 395 580V660L272 765 250 758z" />
        <path fill="#d01b1b" d="M350 790 385 650V880H370C320 870 290 840 285 800z" />
        <path d="M250 735 275 762M290 800Q330 830 385 815M300 835Q340 860 385 850" fill="none" />
      </g>

      <path fill="#2b6b35" d="M387 550 470 597 466 850 445 990 401 1210 404 1285 315 1235 319 1165 375 860 385 780z" />
      <path fill="#3b9248" d="M385 780 467 825 466 850 445 990 401 1210 319 1165 375 860z" />
      <path d="M378 842 460 886M319 1165 401 1210" />
      <path fill="#429f50" d="M470 597 490 565 525 545Q545 480 600 462 640 455 665 465L705 445 720 465 722 690 789 990V1065L404 1285 401 1210 445 990 466 850z" />
      <path fill="#55de6a" d="M387 550 420 515 455 488Q480 440 520 412 545 402 592 412L620 395 705 445 665 465Q640 455 600 462 545 480 525 545L490 565 470 597z" />
      <path fill="none" d="M400 535 485 585M420 513 505 560M440 500 527 545M600 406 668 463M612 400 690 450" />
      <path fill="#2b7b38" opacity=".6" stroke="none" d="M578 590 625 615 622 670 590 690z" />
      <path fill="url(#redPanel)" d="M523 740Q530 715 560 700L640 660Q668 655 670 680L675 770 719 945Q724 990 690 1020L490 1132Q470 1135 470 1112L512 900z" />
      <path fill="#8d0b0b" d="M645 665Q668 655 670 680L675 770 719 945Q724 990 690 1020L490 1132Q470 1135 473 1118L670 1005Q705 985 700 950L652 770z" />
      <path d="M480 1118 680 1005Q712 985 706 945" fill="none" stroke="#ff4a3e" strokeWidth="6" />
      <path d="M648 690H668M652 770 673 765M700 950 719 945" fill="none" />
      <path fill="url(#steel)" d="M600 532Q575 530 568 560 570 590 580 600L645 635Q690 620 688 585 685 570 675 568z" />
      <ellipse cx="664" cy="602" rx="23" ry="32" fill="#686460" transform="rotate(14 664 602)" />
    </g>
  </svg>
);

/* ---------- data ---------- */

const quick: [string, string, boolean][] = [
  ['home', 'Home', false], ['doc', 'New', true], ['open', 'Open', true], ['save', 'Save', true], ['print', 'Print', true], ['undo', 'Undo', true],
];
const viewTools: [string, boolean][] = [
  ['zoomFit', false], ['zoomArea', false], ['prevView', false], ['section', false], ['annotate', false], ['orient', true],
  ['cube', true], ['eye', true], ['appearance', false], ['scene', true], ['monitor', true],
];
type Cmd = [string, string, number, boolean?];
const ribbon: Cmd[][] = [
  [['newProj', 'New Inspection\nProject', 104], ['editProj', 'Edit Inspection\nProject', 101, true], ['template', 'Create New\ntemplate', 81, true]],
  [['characteristic', 'Add\nCharacteristic', 95, true]],
  [['balloonAdd', 'Add/Edit\nBalloons', 64, true], ['balloonRemove', 'Remove\nBalloons', 61], ['balloonSelect', 'Select\nBalloons', 61]],
  [['updateProj', 'Update Inspection\nProject', 124, true]],
  [['launch', 'Launch\nTemplate Editor', 107]],
  [['methods', 'Edit Inspection\nMethods', 101], ['operations', 'Edit\nOperations', 78], ['vendors', 'Edit\nVendors', 61]],
];
const tabs: [string, number][] = [
  ['Assembly', 83], ['Layout', 62], ['Sketch', 62], ['Evaluate', 74], ['SOLIDWORKS Add-Ins', 173], ['MBD', 56], ['SOLIDWORKS CAM', 157], ['SOLIDWORKS Inspection', 204],
];
const tree: [string, string, boolean][] = [
  ['history', 'History', true], ['sensors', 'Sensors', false], ['annotations', 'Annotations', true],
  ['plane', 'Front Plane', false], ['plane', 'Top Plane', false], ['plane', 'Right Plane', false], ['origin', 'Origin', false],
  ['part', '(f) 1.Base<1> (Default<<Defa', true], ['part', '2.piller support<1> (Default<', true], ['part', '3.Bearing Support<1> (Defaul', true],
  ['part', '12.Valve housing<1> (Default', true], ['part', '(-) 11.Valve<1> (Default<<De', true], ['part', '19.Crank Case<1> (Default<<', true],
  ['asm', '(-) Crankshaft Assemply<1> (', true], ['part', '(-) 14.Crankshaft valve crank<1', true],
  ['screw', '(-) radial ball bearing_68_skf<', true], ['screw', '(-) radial ball bearing_68_skf<', true],
  ['part', '(-) 15.Connecting rod hub<1>', true], ['part', '20.Crank case Gasket<1> (Def', true], ['part', '21.Crankcase Cover<1> (Defau', true],
  ['screw', '(-) radial ball bearing_68_skf<', true],
  ...[1, 2, 3, 4, 5, 6].map(n => ['part', `(-) 22.Hup Pin<${n}> (Default<<I`, true] as [string, string, boolean]),
  ['part', '8.Sylinder Body<1> (Default<', true], ['part', '10.Cylinder bolt<1> (Default<', true],
];

const apps: { name: string; mark?: string; on?: boolean; draw: React.ReactNode }[] = [
  { name: 'Start', draw: <path d="M1 1h14v14H1zM17 1h14v14H17zM1 17h14v14H1zM17 17h14v14H17z" fill="#35b8f5" /> },
  { name: 'Search', draw: <><circle cx="18" cy="13" r="10.500" fill="#3a3538" stroke="#e8e8e8" strokeWidth="2.500" /><path d="m10 21-7 8" stroke="#ddd" strokeWidth="3" /></> },
  { name: 'Task View', draw: <><path d="M1 9h22v21H1z" fill="#666" /><path d="M9 1h22v21H9z" fill="#e6e6e6" /><path d="M9 9h14v13H9z" fill="#b9b9b9" /></> },
  { name: 'Store', draw: <><path d="M10 6V1h12v5" fill="none" stroke="#2ba0dd" strokeWidth="2" /><path d="M2 5h28v20q0 5-5 5H7q-5 0-5-5z" fill="#f2f2f2" /><path d="M10 11h6v6h-6z" fill="#e5532d" /><path d="M17 11h6v6h-6z" fill="#7db928" /><path d="M10 18h6v6h-6z" fill="#2ca2dd" /><path d="M17 18h6v6h-6z" fill="#f5b80f" /></> },
  { name: 'Settings', draw: <><circle cx="16" cy="16" r="12" fill="none" stroke="#7d8895" strokeWidth="5" strokeDasharray="7 5.560" /><circle cx="16" cy="16" r="11" fill="#75808d" /><circle cx="16" cy="16" r="6" fill="#1b63a8" stroke="#dce6ee" strokeWidth="2" /></> },
  { name: 'Desktop', draw: <><path d="M2 3h28v20H2z" fill="#2593bd" /><path d="M2 3h28L2 20z" fill="#3db0d4" /><path d="M14 23h4v4h-4zM10 27h12v2H10z" fill="#7a8790" /></> },
  { name: 'SOLIDWORKS 2019', on: true, mark: '#58b7e8', draw: <><path d="m2 7 12-6 14 3v18l-13 5-13-6z" fill="#c41a1f" /><path d="m2 7 14 3 12-6-14-3z" fill="#ea3a3a" /><text x="4" y="20" fontSize="13" fontWeight="700" fill="#fff">SW</text><text x="11" y="31" fontSize="9" fontWeight="700" fill="#fff">2019</text></> },
  { name: 'WhatsApp', draw: <><path d="M2 31 4 23A14 14 0 1 1 10 29z" fill="#3cc254" stroke="#fff" strokeWidth="2.500" /><path d="M11 9q3-2 4 3l-1 3q2 3 4 4l3-1q4 2 1 4-4 4-10-3-5-6-1-10z" fill="#fff" /></> },
  { name: 'Facebook', draw: <><circle cx="16" cy="16" r="15" fill="#1674e8" /><path d="M13 31V19H9v-4h4v-4q0-6 8-5v4q-4-1-4 2v3h4l-1 4h-3v12z" fill="#fff" /></> },
  { name: 'Opera', mark: '#8d8a8e', draw: <><ellipse cx="16" cy="16" rx="14" ry="15" fill="#e2202c" /><ellipse cx="16" cy="16" rx="6.500" ry="11" fill="#0b010a" /></> },
  { name: 'Telegram', draw: <><circle cx="16" cy="16" r="13" fill="#2fa3dc" /><path d="m8 16 15-6-3 14-5-4-2 3-1-4z" fill="#fff" /></> },
  { name: 'File Explorer', mark: '#8d8a8e', draw: <><path d="M1 3h11l3 3h16v24H1z" fill="#e2a21c" /><path d="M1 8h30v22H1z" fill="#fdd256" /><path d="M6 30v-6q0-3 3-3h14q3 0 3 3v6z" fill="#1b79bd" /></> },
];

const WindowGlyph = ({ name, label }: { name: string; label: string }) => (
  <ToolButton aria-label={label}><Icon name={name} size={18} /></ToolButton>
);
const PagerGlyph = ({ d }: { d: string }) => (
  <svg width="20" height="12" viewBox="0 0 20 12" aria-hidden="true"><path d={d} fill="#000" /></svg>
);

export default function App() {
  return (
    <Shell>
      <GlobalStyle />
      <TitleBar>
        <Logo>
          <svg width="27" height="32" viewBox="0 0 26 30" fill="none" stroke="#cf3429" strokeWidth="2.200" aria-hidden="true">
            <path d="M9 3q8-3 7 1-1 3-7 6M4 13q10-2 8 4-2 6-11 11l5-12" />
            <path d="M25 13q-8-1-8 3 0 2 3 4t-1 5q-2 1-5 1" />
          </svg>
          <LogoText><b>SOLID</b>WORKS</LogoText>
        </Logo>
        <Menu>
          {['File', 'Edit', 'View', 'Insert', 'Tools', 'Window', 'Help'].map(m => <button key={m}>{m}</button>)}
        </Menu>
        <ToolButton aria-label="Pin menu"><Icon name="pin" size={16} /></ToolButton>
        <Divider />
        <Tools>
          {quick.map(([icon, label, more]) => (
            <React.Fragment key={icon}>
              <ToolButton aria-label={label}><Icon name={icon} /></ToolButton>
              {more && <ArrowButton aria-label={`${label} options`} $pale={icon === 'undo'} />}
            </React.Fragment>
          ))}
          <ToolButton $on aria-label="Select"><Icon name="cursor" /></ToolButton>
          <ArrowButton $framed aria-label="Select options" />
          <ToolButton aria-label="Rebuild"><Icon name="traffic" /></ToolButton>
          <ToolButton aria-label="File properties"><Icon name="list" size={18} /></ToolButton>
          <ToolButton aria-label="Options"><Icon name="gear" size={18} /></ToolButton>
          <ArrowButton aria-label="Options list" />
        </Tools>
        <DocTitle>Six sylinder radial enginr final assemply *</DocTitle>
        <SearchBox>
          <Icon name="prompt" size={18} />
          <input aria-label="Search commands" placeholder="Search Commands" />
          <Icon name="search" size={22} />
          <ArrowButton as="span" />
        </SearchBox>
        <WindowButtons>
          <ToolButton aria-label="Log in"><Icon name="user" /></ToolButton>
          <ToolButton aria-label="Help"><b>?</b></ToolButton>
          <ArrowButton aria-label="Help options" />
          <WindowGlyph name="minimize" label="Minimize" />
          <WindowGlyph name="restore" label="Restore" />
          <WindowGlyph name="close" label="Close" />
        </WindowButtons>
      </TitleBar>

      <Ribbon>
        {ribbon.map((group, i) => (
          <RibbonGroup key={i}>
            {group.map(([icon, label, w, off]) => (
              <RibbonButton key={label} $w={w} disabled={off}>
                <Icon name={icon} size={18} />
                <span>{label}</span>
              </RibbonButton>
            ))}
          </RibbonGroup>
        ))}
        <ExportGrid>
          <ExportButton disabled><Icon name="exportDoc" size={18} />Export to 2D PDF</ExportButton>
          <ExportButton disabled><Icon name="exportDoc" size={18} />Export to 3D PDF</ExportButton>
          <ExportButton disabled><Icon name="exportXls" size={18} />Export to Excel</ExportButton>
          <ExportButton disabled><Icon name="exportDoc" size={18} />Export eDrawing</ExportButton>
          <ExportButton disabled><Icon name="exportSw" size={18} />Export to SOLIDWORKS Inspection Project</ExportButton>
        </ExportGrid>
        <div>
          <ExportButton disabled><Icon name="quality" size={18} />QualityXpert</ExportButton>
          <ExportButton disabled><Icon name="netInspect" size={18} />Net-Inspect</ExportButton>
        </div>
      </Ribbon>

      <TabRow>
        {tabs.map(([label, w], i) => <CommandTab key={label} $w={w} $on={i === 7}>{label}</CommandTab>)}
        <ViewTools>
          {viewTools.map(([icon, more]) => (
            <React.Fragment key={icon}>
              <ToolButton aria-label={icon}><Icon name={icon} /></ToolButton>
              {more && <ArrowButton $pale aria-label={`${icon} options`} />}
            </React.Fragment>
          ))}
        </ViewTools>
        <DocButtons>
          <WindowGlyph name="dockLeft" label="Previous pane" />
          <WindowGlyph name="dockRight" label="Next pane" />
          <WindowGlyph name="minimize" label="Minimize document" />
          <WindowGlyph name="restore" label="Restore document" />
          <WindowGlyph name="close" label="Close document" />
        </DocButtons>
      </TabRow>

      <Body>
        <Panel>
          <Grip><Dot /></Grip>
          <PanelTabs>
            {['asm', 'property', 'config', 'target', 'ball', 'camCube'].map((n, i) => (
              <PanelTab key={n} $on={i === 0} aria-label={`${n} manager`}><Icon name={n} size={18} /></PanelTab>
            ))}
            <Pager aria-label="Previous tab"><PagerGlyph d="M12 2v8L8 6z" /></Pager>
            <Pager aria-label="Next tab"><PagerGlyph d="M9 2v8l4-4z" /></Pager>
          </PanelTabs>
          <FilterBox>
            <Icon name="filter" size={18} />
            <ArrowButton aria-label="Filter options" />
          </FilterBox>
          <TreeArea>
            <Tree>
              <TreeRow $root><Icon name="asm" size={18} />Six sylinder radial enginr final asse</TreeRow>
              {tree.map(([icon, label, more], i) => (
                <TreeRow key={i}>
                  <Caret $hidden={!more} aria-label="Expand" />
                  <Icon name={icon} size={18} />
                  {label}
                </TreeRow>
              ))}
            </Tree>
            <VScroll />
          </TreeArea>
          <HScroll />
          <PanelFoot />
        </Panel>
        <Viewport>
          <EngineDrawing />
          <Handle aria-label="Collapse panel"><Dot /></Handle>
          <Triad>
            <svg width="78" height="96" viewBox="0 0 78 96" aria-hidden="true">
              <path d="M39 50V30" stroke="#1d5c1d" strokeWidth="5" />
              <path d="M39 18 45 33Q39 38 33 33z" fill="#2a8a2a" />
              <path d="M39 50 22 58" stroke="#14148c" strokeWidth="5" />
              <path d="M11 65 20 55 25 64z" fill="#2020c8" />
              <path d="M39 50 56 58" stroke="#a01616" strokeWidth="5" />
              <path d="M67 65 58 55 53 64z" fill="#d82424" />
              <text x="35" y="16" fontSize="13" fill="#2a7a2a">Y</text>
              <text x="3" y="71" fontSize="13" fill="#2020a0">Z</text>
              <text x="65" y="72" fontSize="13" fill="#c02020">X</text>
            </svg>
            *Isometric
          </Triad>
          <TaskPane>
            {['home', 'books', 'folder', 'palette', 'ball', 'property', 'chat'].map((n, i) => (
              <PaneTab key={n} $on={i === 0} aria-label={`${n} pane`}><Icon name={n} size={18} /></PaneTab>
            ))}
          </TaskPane>
        </Viewport>
      </Body>

      <ModelTabs>
        {['M5 3v10M12 3 7 8l5 5z', 'M11 3 5 8l6 5z', 'M5 3l6 5-6 5z', 'M11 3v10M4 3l5 5-5 5z'].map((d, i) => (
          <StepButton key={d} aria-label={['First', 'Back', 'Forward', 'Last'][i]}>
            <svg width="16" height="16" viewBox="0 0 16 16" fill="#8385a3" stroke="#8385a3" aria-hidden="true"><path d={d} /></svg>
          </StepButton>
        ))}
        <ModelTab $w={77} $on>Model</ModelTab>
        <ModelTab $w={88}>3D Views</ModelTab>
        <ModelTab $w={144}>Motion Study 1</ModelTab>
      </ModelTabs>
      <StatusBar>
        SOLIDWORKS Premium 2019 SP5.0
        <Spacer />
        <StatusCell $w={112}>Under Defined</StatusCell>
        <StatusCell $w={7} />
        <StatusCell $w={124}>Editing Assembly</StatusCell>
        <StatusCell $w={17} />
        <Units>MMGS</Units>
        <Icon name="tag" size={18} />
      </StatusBar>

      <Taskbar>
        <Wallpaper viewBox="0 0 1920 60" preserveAspectRatio="none" aria-hidden="true">
          <filter id="haze"><feGaussianBlur stdDeviation="4" /></filter>
          <filter id="fine"><feGaussianBlur stdDeviation="1" /></filter>
          <g filter="url(#haze)">
            <path d="M240 0H500L520 60H150L155 32 230 20z" fill="#1d1416" />
            <path d="M155 35 185 40 210 60H165z" fill="#6d4e4c" />
            <path d="M360 40 425 15 430 30 405 60H290z" fill="#55543f" />
            <path d="M430 15 495 0 510 60H410z" fill="#352a24" />
            <path d="M682 12Q730 48 780 26L820 8 885 30 900 64H676z" fill="#5d6d41" />
            <path d="M900 0H930L980 60H940z" fill="#3a2522" />
            <path d="M1040 5 1065 0 1080 60H1045z" fill="#4b5a35" />
            <path d="M1090 25Q1130-5 1160 8L1130 30z" fill="#594a3a" />
            <path d="M1200 0 1330 20 1400 60H1340L1180 15z" fill="#241517" />
            <path d="M1450 0H1580L1520 50 1440 60z" fill="#33201f" />
            <path d="M1680 0 1720 30M1770 0 1740 60 1770 60 1800 0z" fill="#2a151b" />
          </g>
          <g filter="url(#fine)">
            <path d="M498 0H570Q575 20 580 40L594 60H525L500 18z" fill="#a4bd7c" />
            <path d="M498 4Q505 30 525 60H540L520 30 510 0z" fill="#dff0b0" />
            <path d="M300 0Q340 30 400 18L430 4V0z" fill="#0a0409" />
            <ellipse cx="358" cy="49" rx="9" ry="8" fill="#0b0609" />
            <path d="M1479 0H1538Q1532 28 1514 48 1482 30 1479 0z" fill="#b3778a" />
            <path d="M1520 4Q1508 25 1514 46 1526 20 1520 4z" fill="#2c0a20" stroke="#e6d3c0" />
            <path d="M700 58Q740 60 770 40T840 55" fill="none" stroke="#8a9a66" />
          </g>
        </Wallpaper>
        <Apps>
          {apps.map(a => (
            <AppButton key={a.name} aria-label={a.name} $on={a.on} $mark={a.mark}>
              <svg width="30" height="30" viewBox="0 0 32 32" aria-hidden="true">{a.draw}</svg>
            </AppButton>
          ))}
        </Apps>
        <Tray>
          <svg width="18" height="10" viewBox="0 0 18 10" fill="none" stroke="#fff" strokeWidth="1.500" aria-hidden="true"><path d="m1 9 8-8 8 8" /></svg>
          <Lang>ENG</Lang>
          <svg width="20" height="16" viewBox="0 0 20 16" fill="none" stroke="#fff" strokeWidth="1.500" aria-hidden="true"><path d="M1 6q9-9 18 0M4 9q6-6 12 0M7 12q3-3 6 0" /><circle cx="10" cy="14" r="1.500" fill="#fff" /></svg>
          <svg width="18" height="16" viewBox="0 0 18 16" fill="none" stroke="#fff" strokeWidth="1.400" aria-hidden="true"><path d="M1 5v6h3l5 4V1L4 5zM11 5q2 3 0 6M13 3q4 5 0 10" /></svg>
          <svg width="20" height="16" viewBox="0 0 20 16" fill="none" stroke="#fff" strokeWidth="1.500" aria-hidden="true"><path d="M9 3h8v11H6v-4M18 6v5" /><path d="M2 2v5h4V2zM4 7v4" fill="#fff" /></svg>
          <Clock>4:37 AM<br />9/28/2022</Clock>
        </Tray>
      </Taskbar>
      <Watermark aria-hidden="true">
        <span lang="ar">مستقل</span>
        <small>mostaql.com</small>
      </Watermark>
    </Shell>
  );
}
